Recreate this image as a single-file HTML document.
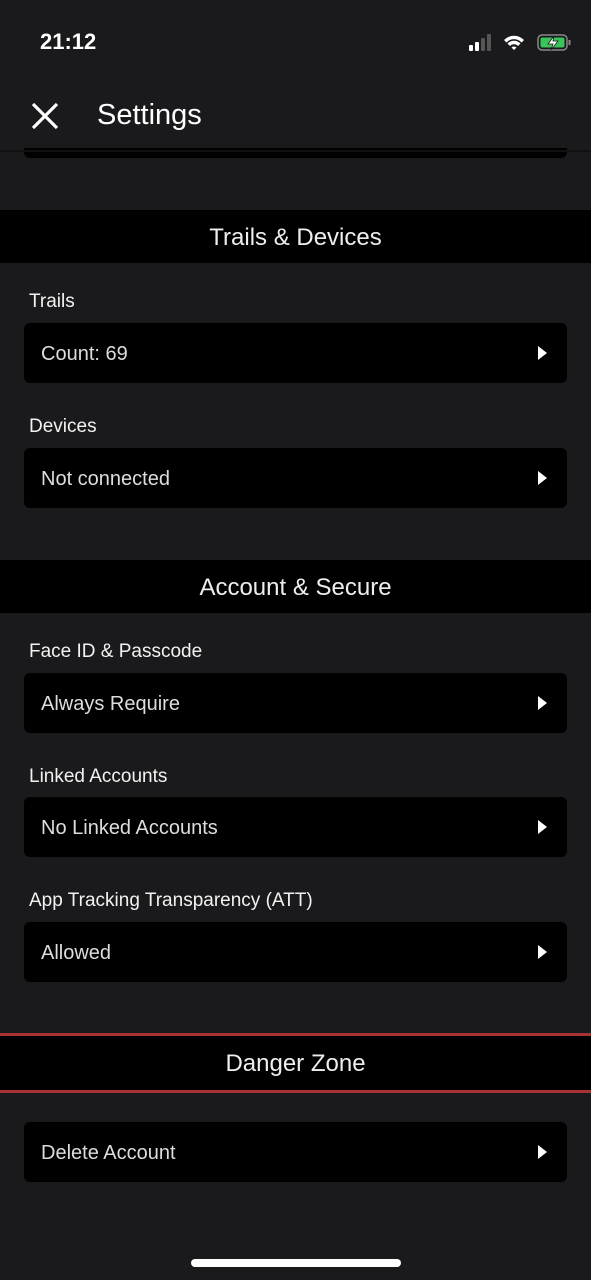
<!DOCTYPE html>
<html><head><style>
body{margin:0;width:591px;height:1280px;background:#1a191b;position:relative;overflow:hidden;font-family:"Liberation Sans","DejaVu Sans",sans-serif;color:#fff}
.a{position:absolute}
.band{position:absolute;left:0;width:591px;background:#000;text-align:center;font-size:24px;color:#eee}
.lbl{position:absolute;left:29px;font-size:19px;color:#f2f2f2}
.card{position:absolute;left:24px;width:543px;height:60px;background:#000;border-radius:6px;font-size:20px;color:#ddd;line-height:62px;text-indent:17px}
.card:after{content:"";position:absolute;right:20px;top:23px;border-left:9px solid #fff;border-top:7px solid transparent;border-bottom:7px solid transparent}
</style></head><body>
<div class="a" style="left:40px;top:29px;font-size:22px;font-weight:bold">21:12</div>
<svg class="a" style="left:466px;top:32px" width="110" height="22" viewBox="0 0 110 22">
<rect x="3" y="13" width="4" height="6" rx="1" fill="#fff"/><rect x="9" y="10" width="4" height="9" rx="1" fill="#fff"/><rect x="15" y="6" width="4" height="13" rx="1" fill="#555"/><rect x="21" y="2" width="4" height="17" rx="1" fill="#555"/>
<path d="M38 8a14 14 0 0 1 20 0l-2.5 2.5a10 10 0 0 0-15 0z M41.5 11.5a9 9 0 0 1 13 0l-2.5 2.5a5.5 5.5 0 0 0-8 0z M45.5 15.5a3.5 3.5 0 0 1 5 0L48 18z" fill="#fff"/>
<rect x="72" y="3" width="29" height="15" rx="4" fill="none" stroke="#888" stroke-width="1.5"/><rect x="74.5" y="5.5" width="24" height="10" rx="2" fill="#3ac55a"/><rect x="102.5" y="8" width="2" height="5" fill="#888"/>
<path d="M88 4l-6 8h5l-2 6 7-9h-5z" fill="#fff" stroke="#1a191b" stroke-width="0.8"/></svg>
<svg class="a" style="left:30px;top:101px" width="30" height="30"><path d="M3 3L27 27M27 3L3 27" stroke="#fff" stroke-width="3.2"/></svg>
<div class="a" style="left:97px;top:99px;font-size:29px">Settings</div>
<div class="a" style="left:24px;top:148px;width:543px;height:10px;background:#000;border-radius:0 0 6px 6px"></div>
<div class="a" style="left:0;top:150px;width:591px;height:2px;background:#111"></div>
<div class="band" style="top:210px;height:53px;line-height:55px">Trails &amp; Devices</div>
<div class="lbl" style="top:291px">Trails</div>
<div class="card" style="top:323px">Count: 69</div>
<div class="lbl" style="top:416px">Devices</div>
<div class="card" style="top:448px">Not connected</div>
<div class="band" style="top:560px;height:53px;line-height:55px">Account &amp; Secure</div>
<div class="lbl" style="top:641px">Face ID &amp; Passcode</div>
<div class="card" style="top:673px">Always Require</div>
<div class="lbl" style="top:766px">Linked Accounts</div>
<div class="card" style="top:797px">No Linked Accounts</div>
<div class="lbl" style="top:890px">App Tracking Transparency (ATT)</div>
<div class="card" style="top:922px">Allowed</div>
<div class="band" style="top:1033px;height:54px;line-height:56px;border-top:3px solid #a83232;border-bottom:3px solid #a83232">Danger Zone</div>
<div class="card" style="top:1122px">Delete Account</div>
<div class="a" style="left:191px;top:1259px;width:210px;height:8px;border-radius:4px;background:#fff"></div>
</body></html>
